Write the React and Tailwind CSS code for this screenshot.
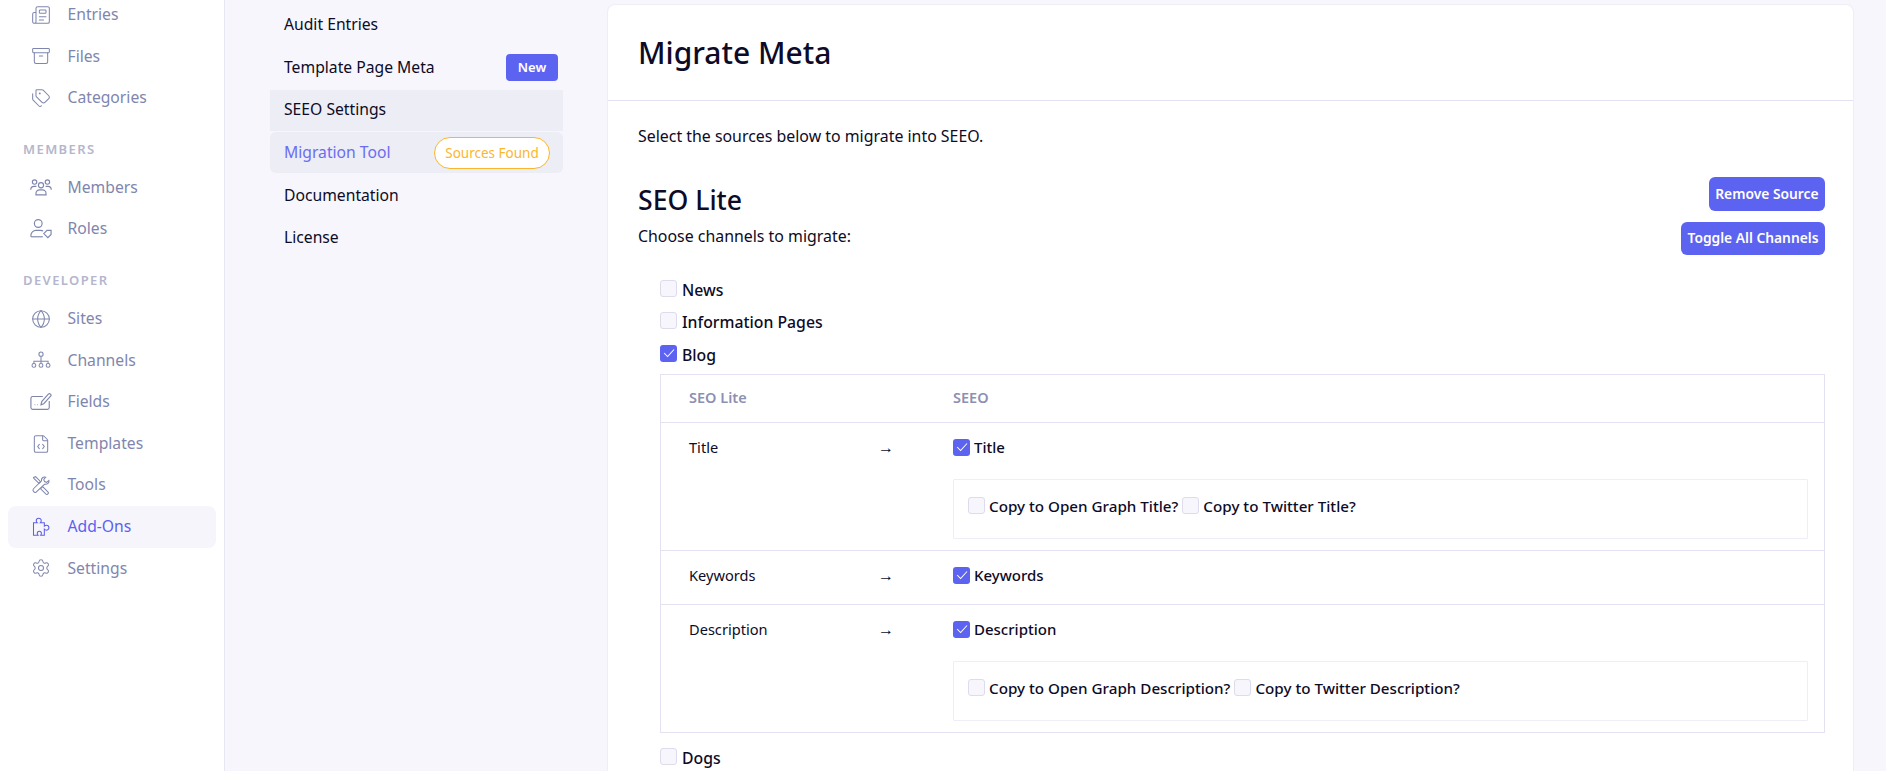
import { Newspaper, Archive, Tags, Globe, FileCode, Settings } from "lucide-react";

function MembersIcon(props) {
  return (
    <svg viewBox="0 0 24 24" fill="none" stroke="currentColor" strokeWidth="1" {...props}>
      <circle cx="5" cy="5.500" r="2.400" />
      <circle cx="19" cy="5.500" r="2.400" />
      <circle cx="12" cy="9" r="2.800" />
      <path d="M.8 14c0-2.200 1.600-3.800 3.700-3.800H7" />
      <path d="M23.200 14c0-2.200-1.600-3.800-3.700-3.800H17" />
      <path d="M6.500 19.500V18c0-2.200 1.800-4 4-4h3c2.200 0 4 1.800 4 4v1.500z" />
    </svg>
  );
}

function RolesIcon(props) {
  return (
    <svg viewBox="0 0 24 24" fill="none" stroke="currentColor" strokeWidth="1" {...props}>
      <circle cx="9" cy="6" r="4.200" />
      <path d="M1 20.500V19c0-3 2.500-5.500 5.500-5.500h5c1 0 2 .3 2.800.8" />
      <path d="M1 20.500h13" />
      <path d="M15 17l3.500-3.500H23v4.500L19.500 21.500z" />
    </svg>
  );
}

function FieldsIcon(props) {
  return (
    <svg viewBox="0 0 24 24" fill="none" stroke="currentColor" strokeWidth="1" {...props}>
      <path d="M14 6H3a2 2 0 0 0-2 2v10a2 2 0 0 0 2 2h16a2 2 0 0 0 2-2v-7" />
      <path d="M5 15h.8M8 15h.8" />
      <path d="M12 15l.8-3.500L20 3.500a1.500 1.500 0 0 1 2.500 2.200l-7.500 8.200z" />
    </svg>
  );
}

function ToolsIcon(props) {
  return (
    <svg viewBox="0 0 24 24" fill="none" stroke="currentColor" strokeWidth="1.1" {...props}>
      <path d="M3 3l2.500-1 6 6-2 2-6-6z" />
      <path d="M14 14l6.500 6.500a1.800 1.800 0 0 1-2.500 2.500L11.500 16.500z" />
      <path d="M21.500 6.500l-2.800 2.300-2.500-.9-.9-2.500 2.300-2.800c-3-.9-5.500 1.300-5 4.400L3 16.500c-2 2 1.500 6 3.500 3.800L16.500 11c3 .6 5.800-1.500 5-4.500z" />
    </svg>
  );
}

function ChannelsIcon(props) {
  return (
    <svg viewBox="0 0 24 24" fill="none" stroke="currentColor" strokeWidth="1.2" {...props}>
      <circle cx="12" cy="5" r="2.500" />
      <circle cx="3.500" cy="18.500" r="2.300" />
      <circle cx="12" cy="18.500" r="2.300" />
      <circle cx="20.500" cy="18.500" r="2.300" />
      <path d="M12 7.500v8.700M3.500 16.200v-2.700h17v2.700" />
    </svg>
  );
}

function AddOnsIcon(props) {
  return (
    <svg viewBox="0 0 24 24" fill="none" stroke="currentColor" strokeWidth="1.2" {...props}>
      <path d="M3 7h4.500c-1-1-1.200-1.700-1.200-2.500a3 3 0 0 1 6 0c0 .8-.3 1.500-1.200 2.500H16v4c1-.9 1.700-1.200 2.500-1.200a3 3 0 0 1 0 6c-.8 0-1.500-.3-2.500-1.200V22h-4.500c.7-1 1-1.500 1-2.300a2.500 2.500 0 0 0-5 0c0 .8.3 1.300 1 2.300H3z" />
    </svg>
  );
}

const mainLinks = [
  { label: "Entries", icon: Newspaper },
  { label: "Files", icon: Archive },
  { label: "Categories", icon: Tags },
];
const memberLinks = [
  { label: "Members", icon: MembersIcon, wide: true },
  { label: "Roles", icon: RolesIcon, wide: true },
];
const devLinks = [
  { label: "Sites", icon: Globe },
  { label: "Channels", icon: ChannelsIcon },
  { label: "Fields", icon: FieldsIcon, wide: true },
  { label: "Templates", icon: FileCode },
  { label: "Tools", icon: ToolsIcon },
  { label: "Add-Ons", icon: AddOnsIcon, active: true },
  { label: "Settings", icon: Settings },
];

function SideLink({ link }) {
  const Icon = link.icon;
  return (
    <div
      className={`flex items-center h-[41.6px] mx-2 pl-[23px] rounded-lg text-[15.7px] ${
        link.active ? "bg-[#f6f5fb] text-[#5d5ff0]" : "text-[#7f86ad]"
      }`}
    >
      <span className="w-[36.500px] flex-shrink-0">
        <Icon className={link.wide ? "w-[22px] h-[22px] -ml-[1px]" : "w-[20px] h-[20px]"} strokeWidth={1.25} />
      </span>
      {link.label}
    </div>
  );
}

function SideHeading({ children }) {
  return (
    <div className="h-[30px] mt-[18px] pb-[4px] pl-[23px] flex items-center text-[13px] font-semibold tracking-[1.4px] text-[#b5b6cd]">
      {children}
    </div>
  );
}

function Checkbox({ checked }) {
  if (!checked) {
    return <span className="w-[17px] h-[17px] flex-shrink-0 rounded-[3px] border border-[#dcdcec] bg-[#f6f6fc]" />;
  }
  return (
    <span className="w-[17px] h-[17px] flex-shrink-0 rounded-[3px] bg-[#5d63f1] flex items-center justify-center">
      <svg viewBox="0 0 12 12" className="w-[14px] h-[14px]" fill="none" stroke="white" strokeWidth="0.9">
        <path d="M1.800 6l3 3 5.500-6" />
      </svg>
    </span>
  );
}

function Check({ label, checked, className = "" }) {
  return (
    <label className={`flex items-center gap-[4px] font-medium text-[#0d0b26] ${className}`}>
      <Checkbox checked={checked} />
      <span className="pt-[1px]">{label}</span>
    </label>
  );
}

function ChannelCheck({ label, checked, className = "" }) {
  return (
    <label className={`flex items-center gap-[5px] text-[15.8px] font-medium text-[#0d0b26] ${className}`}>
      <Checkbox checked={checked} />
      <span className="pt-[5px]">{label}</span>
    </label>
  );
}

function CopyBox({ a, b }) {
  return (
    <div className="mt-[23px] h-[60px] pb-[5px] border border-[#eeeef7] rounded-[1px] px-[14px] flex items-center gap-[4px] text-[15.200px]">
      <Check label={a} />
      <Check label={b} />
    </div>
  );
}

function FieldRow({ name, children, check, className = "" }) {
  return (
    <div className={`grid grid-cols-[189px_75px_1fr] pl-[28px] pr-[16px] pt-[16px] ${className}`}>
      <div className="text-[14.6px] text-[#0d0b26] h-[17px] mt-[1px] flex items-center">{name}</div>
      <div className="text-[16px] text-[#0d0b26] h-[17px] flex items-center">→</div>
      <div>
        <Check label={check} checked className="h-[17px] text-[15px]" />
        {children}
      </div>
    </div>
  );
}

export default function App() {
  return (
    <div className="flex h-screen overflow-hidden bg-[#f6f6fc] font-['Noto_Sans',sans-serif] text-[#0d0b26]">
      {/* Sidebar */}
      <aside className="w-[225px] flex-shrink-0 bg-white border-r border-[#e7e7f4]">
        <div className="-mt-[6px]">
          {mainLinks.map((l) => <SideLink key={l.label} link={l} />)}
          <SideHeading>MEMBERS</SideHeading>
          {memberLinks.map((l) => <SideLink key={l.label} link={l} />)}
          <SideHeading>DEVELOPER</SideHeading>
          {devLinks.map((l) => <SideLink key={l.label} link={l} />)}
        </div>
      </aside>

      {/* Add-on nav */}
      <nav className="w-[293px] ml-[45px] flex-shrink-0 mt-[4.500px] text-[15.7px] flex flex-col gap-[1.6px]">
        <div className="h-[41px] px-[14px] flex items-center">Audit Entries</div>
        <div className="h-[41px] pl-[14px] pr-[5px] flex items-center justify-between">
          Template Page Meta
          <span className="bg-[#5d63f1] text-white text-[13px] font-semibold rounded-[4px] h-[27px] w-[52px] flex items-center justify-center">New</span>
        </div>
        <div className="h-[41px] px-[14px] flex items-center bg-[#ecedf5]">SEEO Settings</div>
        <div className="h-[41px] px-[14px] flex items-center justify-between bg-[#ecedf5] rounded-md text-[#6b6cf2]">
          Migration Tool
          <span className="bg-white border border-[#fbb62c] text-[#fbb62c] text-[13.5px] rounded-full h-[32px] w-[116px] -mr-[1px] flex items-center justify-center">Sources Found</span>
        </div>
        <div className="h-[41px] px-[14px] flex items-center">Documentation</div>
        <div className="h-[41px] px-[14px] flex items-center">License</div>
      </nav>

      {/* Main card */}
      <main className="w-[1247px] ml-[44px] flex-shrink-0 mt-[4px] bg-white rounded-t-lg border-x border-t border-[#eeeef7] self-start">
        <div className="h-[96px] px-[30px] flex items-center border-b border-[#e3e2f2]">
          <h1 className="text-[30px] font-medium leading-none">Migrate Meta</h1>
        </div>
        <div className="pl-[30px] pr-[28px] pt-[25px]">
          <p className="text-[15.9px] leading-[20px]">Select the sources below to migrate into SEEO.</p>
          <div className="mt-[31px] flex justify-between items-start">
            <div className="pt-[4px]">
              <h2 className="text-[26.6px] font-medium leading-[38px]">SEO Lite</h2>
              <p className="text-[15.9px] leading-[20px] mt-[7px]">Choose channels to migrate:</p>
            </div>
            <div className="flex flex-col items-end gap-[11px]">
              <button className="h-[34px] px-[6.500px] rounded-md bg-[#5d63f1] text-white text-[13.8px] font-semibold">Remove Source</button>
              <button className="h-[33px] px-[6.500px] rounded-md bg-[#5d63f1] text-white text-[13.8px] font-semibold">Toggle All Channels</button>
            </div>
          </div>

          <div className="ml-[22px] mt-[17px] flex flex-col">
            <ChannelCheck label="News" className="h-[32.500px]" />
            <ChannelCheck label="Information Pages" className="h-[32.500px]" />
            <ChannelCheck label="Blog" checked className="h-[32.500px]" />

            <div className="mt-[4px] border border-[#e3e2f2]">
              <div className="h-[48px] border-b border-[#e3e2f2] pl-[28px] grid grid-cols-[264px_1fr] items-center text-[14.5px] font-semibold text-[#8d8fb3]">
                <div>SEO Lite</div>
                <div>SEEO</div>
              </div>
              <FieldRow name="Title" check="Title" className="h-[128px] border-b border-[#e3e2f2]">
                <CopyBox a="Copy to Open Graph Title?" b="Copy to Twitter Title?" />
              </FieldRow>
              <FieldRow name="Keywords" check="Keywords" className="h-[54px] border-b border-[#e3e2f2]" />
              <FieldRow name="Description" check="Description" className="h-[127px]">
                <CopyBox a="Copy to Open Graph Description?" b="Copy to Twitter Description?" />
              </FieldRow>
            </div>
            <ChannelCheck label="Dogs" className="h-[33px] mt-[7px]" />
          </div>
        </div>
      </main>
    </div>
  );
}
